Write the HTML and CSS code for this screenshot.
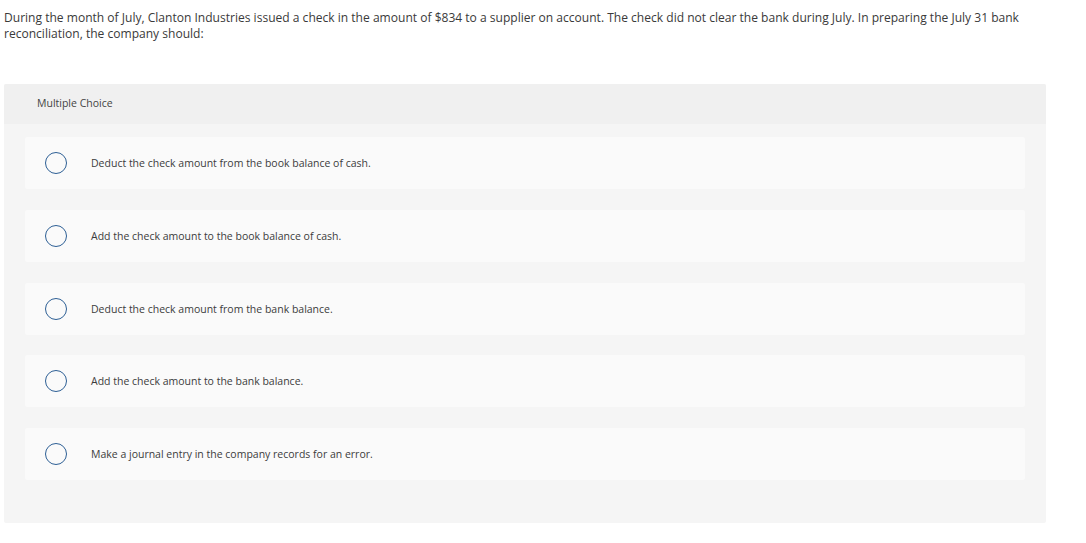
FILE: index.html
```html
<!DOCTYPE html>
<html>
<head>
<meta charset="utf-8">
<link rel="stylesheet" href="styles.css">
</head>
<body>
<div class="page">
  <p class="question">During the month of July, Clanton Industries issued a check in the amount of $834 to a supplier on account. The check did not clear the bank during July. In preparing the July 31 bank reconciliation, the company should:</p>
  <div class="panel">
    <div class="panel-head">Multiple Choice</div>
    <div class="panel-body">
      <div class="option"><span class="radio"></span><span class="label">Deduct the check amount from the book balance of cash.</span></div>
      <div class="option"><span class="radio"></span><span class="label">Add the check amount to the book balance of cash.</span></div>
      <div class="option"><span class="radio"></span><span class="label">Deduct the check amount from the bank balance.</span></div>
      <div class="option"><span class="radio"></span><span class="label">Add the check amount to the bank balance.</span></div>
      <div class="option"><span class="radio"></span><span class="label">Make a journal entry in the company records for an error.</span></div>
    </div>
  </div>
</div>
</body>
</html>
```
FILE: styles.css
```css
* { box-sizing: border-box; }
body {
  margin: 0;
  background: #ffffff;
  font-family: "Open Sans", Lato, sans-serif;
  color: #3a3a3a;
}
.page {
  padding: 10px 0 0 4px;
}
.question {
  margin: 0;
  width: 1040px;
  font-size: 12.05px;
  line-height: 16px;
}
.panel {
  margin-top: 42px;
  width: 1042px;
  border-radius: 2px;
  overflow: hidden;
  background: #f5f5f5;
}
.panel-head {
  height: 40px;
  background: #f0f0f0;
  padding-left: 33px;
  padding-bottom: 2px;
  display: flex;
  align-items: center;
  font-size: 10.5px;
  color: #444;
}
.panel-body {
  padding: 13px 21px 43px 21px;
  display: flex;
  flex-direction: column;
  gap: 20.75px;
}
.option {
  height: 52px;
  background: #fafafa;
  border-radius: 2px;
  display: flex;
  align-items: center;
  padding-left: 20px;
}
.radio {
  width: 22px;
  height: 22px;
  border: 1.5px solid #2d5f95;
  border-radius: 50%;
  flex: none;
}
.label {
  margin-left: 24px;
  font-size: 10.5px;
  color: #3c3c3c;
}
```
